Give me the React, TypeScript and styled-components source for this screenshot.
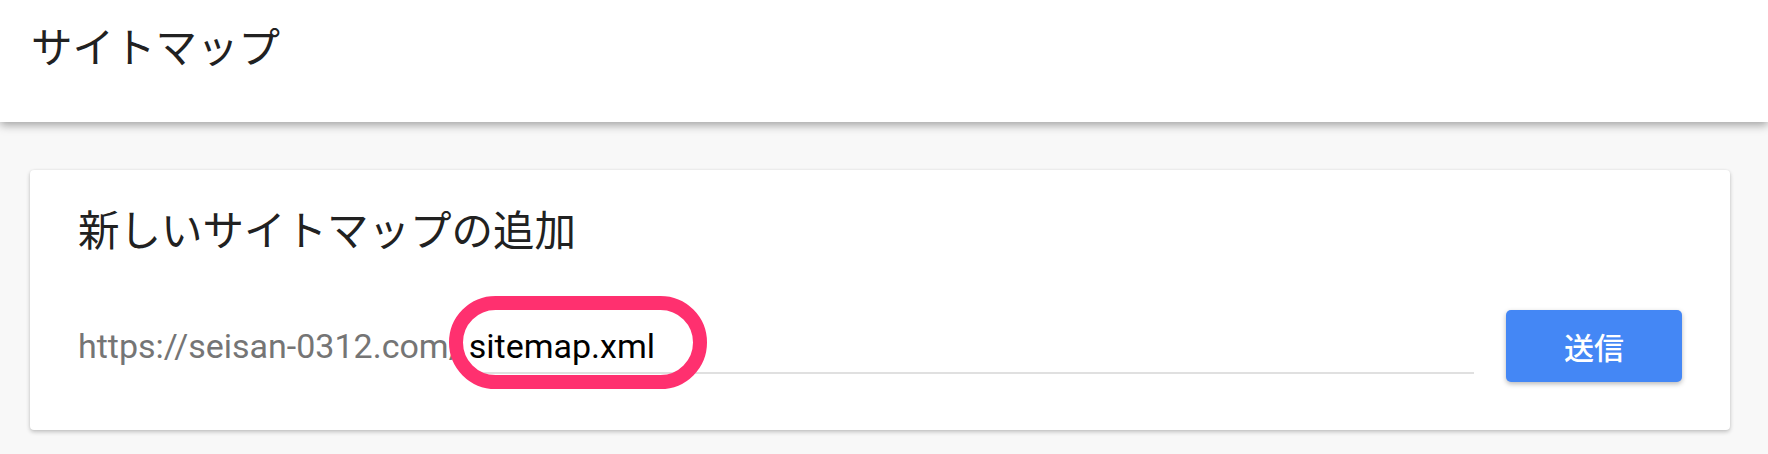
import React from "react";
import styled, { createGlobalStyle } from "styled-components";

const GlobalStyle = createGlobalStyle`
  html, body {
    margin: 0;
    padding: 0;
    background: #f8f8f8;
    font-family: Roboto, "Noto Sans CJK JP", sans-serif;
  }
  * { box-sizing: border-box; }
`;

const Page = styled.div`
  min-height: 454px;
  background: #f8f8f8;
  overflow: hidden;
`;

const Header = styled.header`
  height: 122px;
  background: #ffffff;
  padding: 24px 0 0 31px;
  box-shadow: 0 3px 9px rgba(0, 0, 0, 0.36);
  position: relative;
  z-index: 1;
`;

const PageTitle = styled.h1`
  margin: 0;
  font-family: "Noto Sans CJK JP", sans-serif;
  font-weight: 400;
  font-size: 41.5px;
  line-height: 42px;
  color: #212121;
`;

const Card = styled.section`
  margin: 48px 38px 0 30px;
  background: #ffffff;
  border-radius: 4px;
  padding: 37px 48px 48px 48px;
  box-shadow: 0 2px 4px rgba(0, 0, 0, 0.22), 0 0 2px rgba(0, 0, 0, 0.08);
`;

const CardTitle = styled.h2`
  margin: 0 0 61px 0;
  font-family: "Noto Sans CJK JP", sans-serif;
  font-weight: 400;
  font-size: 41.5px;
  line-height: 42px;
  color: #212121;
`;

const Row = styled.div`
  display: flex;
  align-items: center;
`;

const Prefix = styled.span`
  font-family: Roboto, sans-serif;
  font-size: 34px;
  line-height: 40px;
  color: #757575;
  white-space: nowrap;
`;

const Field = styled.div`
  flex: 1;
  position: relative;
  display: flex;
`;

const Input = styled.input`
  flex: 1;
  width: 100%;
  height: 56px;
  padding: 8px 0 6px 6px;
  border: none;
  border-bottom: 2px solid #e0e0e0;
  outline: none;
  background: transparent;
  font-family: Roboto, sans-serif;
  font-size: 34px;
  line-height: 40px;
  color: #000000;
`;

const Highlight = styled.div`
  position: absolute;
  left: -14px;
  top: -22px;
  width: 258px;
  height: 93px;
  border: 14px solid #ff306f;
  border-radius: 47px;
  pointer-events: none;
`;

const SubmitButton = styled.button`
  margin-left: 32px;
  width: 176px;
  height: 72px;
  border: none;
  border-radius: 5px;
  background: #4487f5;
  color: #ffffff;
  font-family: "Noto Sans CJK JP", sans-serif;
  font-size: 30px;
  font-weight: 500;
  line-height: 1;
  display: flex;
  align-items: center;
  justify-content: center;
  box-shadow: 0 2px 5px rgba(0, 0, 0, 0.28);
  cursor: pointer;
`;

export default function App() {
  return (
    <>
      <GlobalStyle />
      <Page>
        <Header>
          <PageTitle>サイトマップ</PageTitle>
        </Header>
        <Card>
          <CardTitle>新しいサイトマップの追加</CardTitle>
          <Row>
            <Prefix>https://seisan-0312.com/</Prefix>
            <Field>
              <Input readOnly defaultValue="sitemap.xml" />
              <Highlight />
            </Field>
            <SubmitButton>送信</SubmitButton>
          </Row>
        </Card>
      </Page>
    </>
  );
}
